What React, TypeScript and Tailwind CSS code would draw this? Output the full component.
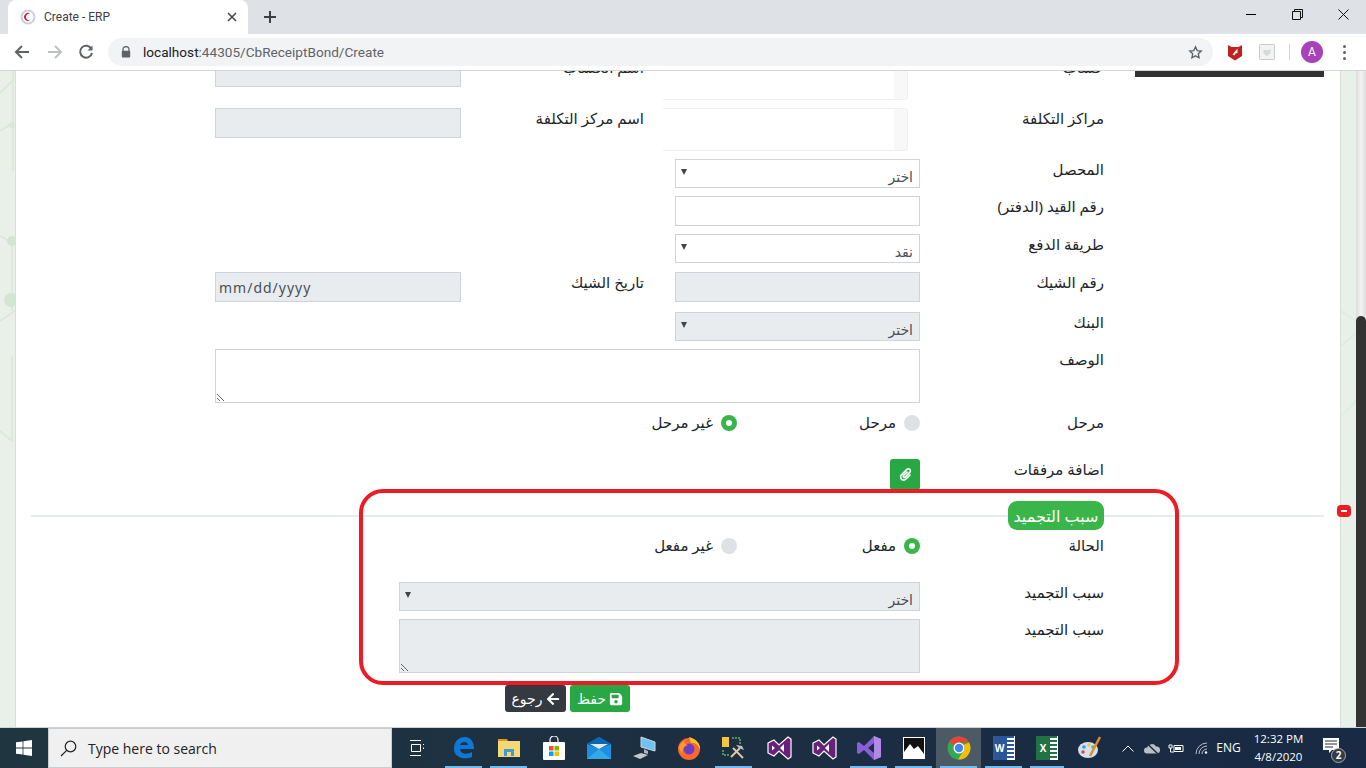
import type { ReactNode } from 'react';
import { FaArrowLeft, FaPaperclip, FaSave } from 'react-icons/fa';

const arabic = "font-['Noto_Sans','DejaVu_Sans',sans-serif]";

// browser chrome
const BrowserBar = () => (
	<div className="h-[71px] shrink-0 font-['Roboto',sans-serif]">
		<div className="h-[34px] bg-[#dee1e6] flex items-end">
			<div className="ml-[8px] w-[240px] h-[34px] bg-white rounded-t-[8px] flex items-center pl-[12px] pr-[10px]">
				<svg width="16" height="16" viewBox="0 0 16 16">
					<circle cx="8" cy="8" r="7.5" fill="#c9cfe8" />
					<circle cx="8" cy="8" r="5.5" fill="#fff" />
					<path d="M10.5 4.8A4 4 0 1 0 10.5 11.2A3.4 3.4 0 1 1 10.5 4.8Z" fill="#e2222c" />
				</svg>
				<span className="ml-[8px] text-[12px] text-[#3c4043] flex-1">Create - ERP</span>
				<svg width="10" height="10" viewBox="0 0 10 10" className="mr-[1px]">
					<path d="M1 1L9 9M9 1L1 9" stroke="#45484c" strokeWidth="1.6" />
				</svg>
			</div>
			<div className="ml-[15px] h-[34px] flex items-center">
				<svg width="14" height="14" viewBox="0 0 14 14">
					<path d="M7 1V13M1 7H13" stroke="#3c4043" strokeWidth="2" />
				</svg>
			</div>
			<div className="flex-1" />
			<div className="flex h-[29px] self-start items-center">
				<div className="w-[46px] flex justify-center">
					<div className="w-[10px] h-[1px] bg-black" />
				</div>
				<div className="w-[46px] flex justify-center">
					<svg width="11" height="11" viewBox="0 0 11 11" fill="none" stroke="#111">
						<path d="M0.5 2.5H8.5V10.5H0.5ZM2.5 2.5V0.5H10.5V8.5H8.5" />
					</svg>
				</div>
				<div className="w-[46px] flex justify-center">
					<svg width="11" height="11" viewBox="0 0 11 11">
						<path d="M0.5 0.5L10.5 10.5M10.5 0.5L0.5 10.5" stroke="#111" />
					</svg>
				</div>
			</div>
		</div>
		<div className="h-[37px] bg-white border-b border-[#d3d5d8] flex items-center">
			<svg width="16" height="16" viewBox="0 0 16 16" className="ml-[14px]" fill="none" stroke="#5f6368" strokeWidth="2">
				<path d="M15 8H2M8 2L2 8L8 14" />
			</svg>
			<svg width="16" height="16" viewBox="0 0 16 16" className="ml-[17px]" fill="none" stroke="#bcc0c4" strokeWidth="2">
				<path d="M1 8H14M8 2L14 8L8 14" />
			</svg>
			<svg width="16" height="16" viewBox="0 0 16 16" className="ml-[15px]" fill="none" stroke="#5f6368" strokeWidth="2">
				<path d="M13.5 5A6 6 0 1 0 14 9" />
				<path d="M14.5 1.5V6.5H9.5Z" fill="#5f6368" strokeWidth="0" />
			</svg>
			<div className="ml-[14px] w-[1105px] h-[28px] rounded-full bg-[#f1f3f4] flex items-center pl-[13px] pr-[10px]">
				<svg width="10" height="12" viewBox="0 0 10 12">
					<path d="M2 5V3.5a3 3 0 0 1 6 0V5" fill="none" stroke="#5f6368" strokeWidth="1.3" />
					<rect x="0.8" y="4.8" width="8.4" height="6.7" rx="1" fill="#5f6368" />
				</svg>
				<span className="ml-[12px] text-[13.6px] text-[#5f6368] flex-1">
					<span className="text-[#202124]">localhost</span>:44305/CbReceiptBond/Create
				</span>
				<svg width="15" height="15" viewBox="0 0 24 24" fill="none" stroke="#5f6368" strokeWidth="2.2">
					<path d="M12 3l2.8 5.900 6.400.8-4.700 4.400 1.200 6.400L12 17.400l-5.700 3.100 1.200-6.400L2.800 9.700l6.400-.8z" />
				</svg>
			</div>
			<svg width="16" height="17" viewBox="0 0 16 17" className="ml-[14px]">
				<path d="M1 1L4.500 3H11.500L15 1V12L8 16.500L1 12Z" fill="#c3201f" />
				<path d="M5.500 10.500L10.500 4.500L10.500 9L8.500 9.500L7.500 11.500Z" fill="#fff" />
			</svg>
			<svg width="16" height="16" viewBox="0 0 16 16" className="ml-[16px]" fill="none">
				<rect x="0.500" y="0.500" width="15" height="15" rx="1" stroke="#c7c9cc" fill="#f3f3f3" />
				<path d="M4.500 5L6 6H10L11.500 5V9.500L8 12L4.500 9.500Z" fill="#d8d9db" />
			</svg>
			<div className="ml-[14px] w-[1px] h-[16px] bg-[#d3d5d8]" />
			<div className="ml-[11px] w-[22px] h-[22px] rounded-full bg-[#a842b8] text-white text-[12px] flex items-center justify-center">A</div>
			<div className="ml-[20px] flex flex-col gap-[3px]">
				<div className="w-[3px] h-[3px] rounded-full bg-[#5f6368]" />
				<div className="w-[3px] h-[3px] rounded-full bg-[#5f6368]" />
				<div className="w-[3px] h-[3px] rounded-full bg-[#5f6368]" />
			</div>
		</div>
	</div>
);

const Strip = ({ left }: { left?: boolean }) => (
	<div className={`w-[16px] shrink-0 bg-[#e9f0ea] ${left ? 'border-r' : 'border-l'} border-[#d8dfd9]`}>
		{left ? (
			<svg width="15" height="460" viewBox="0 0 15 460" fill="none" stroke="#d7e8d7" strokeWidth="1.5">
				<path d="M0 22L14 8M0 60L13 52M13 0V100M0 165L12 172V240M0 250L15 240M12 285V370L0 360" />
				<circle cx="12" cy="54" r="3" fill="#d7e8d7" stroke="none" />
				<circle cx="12" cy="170" r="5" fill="#d2e6d2" stroke="none" />
				<circle cx="11" cy="229" r="7" fill="#d2e6d2" stroke="none" />
			</svg>
		) : (
			<svg width="15" height="460" viewBox="0 0 15 460" fill="none" stroke="#dfeadf" strokeWidth="1.500">
				<path d="M0 240L15 250M0 275L15 262M0 345L15 330" />
			</svg>
		)}
	</div>
);

const Label = ({ w = 'w-[184px]', children }: { w?: string; children: ReactNode }) => (
	<label className={`${w} shrink-0 text-[15px] leading-[21px] text-[#212529] text-right`}>{children}</label>
);

const boxBase = 'border border-[#ced4da] text-[14px] text-[#495057] block';

const Select = ({ w = 'w-[245px]', disabled, text = 'اختر' }: { w?: string; disabled?: boolean; text?: string }) => (
	<div className={`${w} relative`}>
		<select
			dir="rtl"
			disabled={disabled}
			className={`${boxBase} h-[29px] w-full appearance-none pr-[6px] pt-[6px] ${disabled ? 'bg-[#e9ecef]' : 'bg-white'} opacity-100`}
		>
			<option>{text}</option>
		</select>
		<span className="absolute left-[6px] top-[10px] w-0 h-0 border-x-[3px] border-x-transparent border-t-[6px] border-t-[#444]" />
	</div>
);

const Input = ({ w = 'w-[245px]', disabled, value }: { w?: string; disabled?: boolean; value?: string }) => (
	<input
		readOnly
		dir={value ? 'ltr' : 'rtl'}
		value={value ?? ''}
		className={`${boxBase} h-[30px] ${w} px-[3px] tracking-[1px] ${disabled ? 'bg-[#e9ecef]' : 'bg-white'}`}
	/>
);

const TextArea = ({ w, disabled }: { w: string; disabled?: boolean }) => (
	<textarea
		readOnly
		className={`${w} h-[54px] block border border-[#ced4da] ${disabled ? 'bg-[#e9ecef]' : 'bg-white'}`}
	/>
);

// the empty cost-centre box, its left side fades out
const TreeBox = () => (
	<div className="w-[245px] h-[43px] mr-[12px] flex shrink-0 border border-l-0 border-[#f0f0f0] rounded-r-[3px]">
		<div className="w-[13px] bg-[#f8f8f8]" />
	</div>
);

const Radio = ({ on, text, w }: { on?: boolean; text: string; w: string }) => (
	<div className={`${w} flex items-center gap-[8px]`}>
		<span className={`w-[16px] h-[16px] rounded-full flex items-center justify-center ${on ? 'bg-[#3ab54a]' : 'bg-[#dee2e6]'}`}>
			{on && <span className="w-[6px] h-[6px] rounded-full bg-white" />}
		</span>
		<span className="text-[15px] leading-[21px] text-[#212529]">{text}</span>
	</div>
);

const Form = () => (
	<div dir="rtl" className="w-[889px] flex flex-col">
		<div className="flex h-[43px]">
			<Label>حساب</Label>
			<TreeBox />
			<Label w="w-[202px] pr-[19px]">اسم الحساب</Label>
			<Input w="w-[246px]" disabled />
		</div>
		<div className="flex h-[43px] mt-[8px]">
			<Label>مراكز التكلفة</Label>
			<TreeBox />
			<Label w="w-[202px] pr-[19px]">اسم مركز التكلفة</Label>
			<Input w="w-[246px]" disabled />
		</div>
		<div className="flex mt-[8px]">
			<Label>المحصل</Label>
			<Select />
		</div>
		<div className="flex mt-[8px]">
			<Label>رقم القيد (الدفتر)</Label>
			<Input />
		</div>
		<div className="flex mt-[8px]">
			<Label>طريقة الدفع</Label>
			<Select text="نقد" />
		</div>
		<div className="flex mt-[9px]">
			<Label>رقم الشيك</Label>
			<Input disabled />
			<Label w="w-[214px] pr-[31px]">تاريخ الشيك</Label>
			<Input w="w-[246px]" disabled value="mm/dd/yyyy" />
		</div>
		<div className="flex mt-[10px]">
			<Label>البنك</Label>
			<Select disabled />
		</div>
		<div className="flex mt-[8px]">
			<Label>الوصف</Label>
			<TextArea w="w-[705px]" />
		</div>
		<div className="flex items-center mt-[9px] h-[21px]">
			<Label>مرحل</Label>
			<Radio w="w-[183px]" text="مرحل" />
			<Radio w="w-[200px]" on text="غير مرحل" />
		</div>
		<div className="flex mt-[26px]">
			<Label>اضافة مرفقات</Label>
			<button className="w-[30px] h-[31px] bg-[#28a745] rounded-[3px] text-white flex items-center justify-center">
				<FaPaperclip size={13} />
			</button>
		</div>
	</div>
);

const Lower = () => (
	<div dir="rtl" className="w-[889px] ml-[199px] flex flex-col">
		<div className="flex items-center h-[21px] mt-[5px]">
			<Label>الحالة</Label>
			<Radio w="w-[183px]" on text="مفعل" />
			<Radio w="w-[200px]" text="غير مفعل" />
		</div>
		<div className="flex mt-[26px]">
			<Label>سبب التجميد</Label>
			<Select w="w-[521px]" disabled />
		</div>
		<div className="flex mt-[8px]">
			<Label>سبب التجميد</Label>
			<TextArea w="w-[521px]" disabled />
		</div>
		<div className="flex gap-[4px] mt-[12px] mr-[474px]">
			<button className="w-[60px] h-[27px] bg-[#28a745] rounded-[3px] text-white text-[14px] flex items-center justify-center gap-[3px]">
				<FaSave size={14} />
				حفظ
			</button>
			<button className="w-[61px] h-[27px] bg-[#343a40] rounded-[3px] text-white text-[14px] flex items-center justify-center gap-[3px]">
				<FaArrowLeft size={14} />
				رجوع
			</button>
		</div>
	</div>
);

const Page = () => (
	<div className={`h-[656px] flex overflow-hidden relative ${arabic}`}>
		<Strip left />
		<div className="w-[1324px] shrink-0 bg-white flex flex-col">
			<div className="-mt-[14px] flex h-[444px]">
				<div className="w-[1088px] pl-[199px] shrink-0">
					<Form />
				</div>
				<div className="ml-[31px] mt-[14px] w-[189px] h-[6px] bg-[#333] shrink-0" />
			</div>
			<div className="ml-[15px] h-[29px] flex items-center">
				<div className="w-[977px] h-[2px] bg-[#e9ecef]" />
				<div className="w-[96px] h-[29px] rounded-[9px] bg-[#3ab54a] text-white text-[16px] flex items-center justify-center">سبب التجميد</div>
				<div className="w-[220px] h-[2px] bg-[#e9ecef]" />
			</div>
			<Lower />
		</div>
		<Strip />
		<div className="w-[10px] shrink-0 bg-gradient-to-r from-[#dcdcdc] via-[#f4f4f4] to-[#dcdcdc] flex flex-col">
			<div className="h-[245px]" />
			<div className="flex-1 bg-[#333] rounded-t-[5px]" />
		</div>
		{/* annotation drawn over the screenshot */}
		<div className="absolute left-[359px] top-[418px] w-[820px] h-[196px] border-4 border-[#ed1c24] rounded-[24px]" />
		<div className="absolute left-[1337px] top-[434px] w-[14px] h-[12px] bg-[#ed1c24] rounded-[4px] flex items-center justify-center">
			<div className="w-[6px] h-[2px] bg-white" />
		</div>
	</div>
);

// taskbar icons
const Slot = ({ w = 'w-[45px]', line, active, children }: { w?: string; line?: boolean; active?: boolean; children: ReactNode }) => (
	<div className={`${w} h-[40px] relative flex items-center justify-center ${active ? 'bg-[#4b5a65]' : ''}`}>
		{children}
		{line && <div className="absolute bottom-0 left-[4px] right-[4px] h-[2px] bg-[#76b9ed]" />}
	</div>
);

const VsOld = () => (
	<svg width="26" height="26" viewBox="0 0 26 26">
		<path d="M2 8L8 5L13 10L22 2L25 4V22L22 24L13 16L8 21L2 18Z" fill="#68217a" stroke="#fff" strokeWidth="1.200" />
		<path d="M6 10.500V15.500L9 13ZM18 9V17L14 13Z" fill="#fff" />
	</svg>
);

const Taskbar = () => (
	<div className="h-[40px] flex items-center bg-gradient-to-r from-[#1f3640] via-[#1c2f42] to-[#182a44] font-['Open_Sans',sans-serif]">
		<div className="w-[48px] flex justify-center">
			<svg width="16" height="16" viewBox="0 0 16 16" fill="#fff">
				<path d="M0 2.300L6.600 1.400V7.500H0ZM7.400 1.300L16 0V7.500H7.400ZM0 8.400H6.600V14.600L0 13.700ZM7.400 8.400H16V16L7.400 14.700Z" />
			</svg>
		</div>
		<div className="w-[344px] h-[40px] bg-[#f0f0f0] border border-[#c9cdd0] flex items-center pl-[11px]">
			<svg width="17" height="17" viewBox="0 0 17 17" fill="none" stroke="#222" strokeWidth="1.200">
				<circle cx="10.500" cy="6.500" r="5.300" />
				<path d="M6.700 10.300L1 16" />
			</svg>
			<span className="ml-[11px] text-[14px] text-[#222]">Type here to search</span>
		</div>
		<Slot w="w-[49px]">
			<svg width="16" height="18" viewBox="0 0 16 18" fill="none" stroke="#fff">
				<path d="M1 1.500H12M2.500 5.500H11.500V12.500H2.500ZM1 16.500H12M14.500 5V6M14.500 8.500V10" />
			</svg>
		</Slot>
		<Slot line>
			<svg width="22" height="24" viewBox="0 0 22 24">
				<path d="M1 13C1 5 6 1 12 1C18 1 21 6 21 13H7C7 18 14 19 19 16V21C12 24 1 22 1 13ZM7 9H15C15 5 8 5 7 9Z" fill="#0d78d6" />
			</svg>
		</Slot>
		<Slot line>
			<svg width="22" height="20" viewBox="0 0 22 20">
				<path d="M0 3H22V19H0Z" fill="#f7d774" />
				<path d="M0 1H9L10 3H0Z" fill="#d9982a" />
				<path d="M6 18V11H16V18H13V14H9V18Z" fill="#3d9ad9" />
			</svg>
		</Slot>
		<Slot>
			<svg width="22" height="24" viewBox="0 0 22 24">
				<path d="M7 7V4a4 4 0 0 1 8 0V7" fill="none" stroke="#fff" strokeWidth="1.200" />
				<rect x="0" y="6" width="22" height="18" rx="1" fill="#fff" />
				<rect x="6" y="10" width="4.500" height="4.500" fill="#f25022" />
				<rect x="11.500" y="10" width="4.500" height="4.500" fill="#7fba00" />
				<rect x="6" y="15.500" width="4.500" height="4.500" fill="#00a4ef" />
				<rect x="11.500" y="15.500" width="4.500" height="4.500" fill="#ffb900" />
			</svg>
		</Slot>
		<Slot>
			<svg width="24" height="22" viewBox="0 0 24 22">
				<path d="M0 7L12 0L24 7V22H0Z" fill="#1b8fe0" />
				<path d="M0 7L12 0L24 7L12 12Z" fill="#0a67b4" />
				<path d="M3 7L21 7L12 12Z" fill="#dfe8ee" />
				<path d="M0 22L12 12L24 22Z" fill="#35a8ea" />
			</svg>
		</Slot>
		<Slot>
			<svg width="24" height="24" viewBox="0 0 24 24">
				<path d="M9 1L23 6V15L9 11Z" fill="#6fc3f2" stroke="#cfd8dc" />
				<path d="M12 13L16 15V18L12 17Z" fill="#aeb4b8" />
				<path d="M1 20L9 17L16 19L8 23Z" fill="#c4c9cc" />
			</svg>
		</Slot>
		<Slot>
			<svg width="24" height="24" viewBox="0 0 24 24">
				<circle cx="12" cy="13" r="11" fill="#f9682d" />
				<path d="M12 1C20 3 24 9 23 14C22 10 18 6 14 7Z" fill="#ffbd2e" />
				<circle cx="12" cy="13" r="5.500" fill="#6c3ec2" />
				<path d="M2 12C3 7 6 5 8 5C6 8 9 8 11 9C7 10 6 12 5 18Z" fill="#ff9a2b" />
			</svg>
		</Slot>
		<Slot line>
			<svg width="24" height="24" viewBox="0 0 24 24">
				<rect x="0" y="1" width="7" height="10" fill="#f5c542" />
				<path d="M10 2H18V9M1 14V19H8" fill="none" stroke="#62b05a" strokeWidth="1.500" strokeDasharray="2 1" />
				<path d="M9 21L18 12M11 12L21 22" stroke="#d8c9a0" strokeWidth="2" />
				<path d="M14 9L20 10L22 14L17 12Z" fill="#c0c5c9" />
			</svg>
		</Slot>
		<Slot><VsOld /></Slot>
		<Slot><VsOld /></Slot>
		<Slot line>
			<svg width="24" height="24" viewBox="0 0 24 24">
				<path d="M17 0L24 3V21L17 24L7 14L2 18L0 17V7L2 6L7 10ZM17 7L11 12L17 17Z" fill="#8a5fd6" />
				<path d="M17 0L24 3V21L17 24Z" fill="#b18ae8" />
			</svg>
		</Slot>
		<Slot line>
			<svg width="22" height="22" viewBox="0 0 22 22">
				<rect x="0.500" y="0.500" width="21" height="21" fill="#111" stroke="#fff" />
				<path d="M1 21V15L7 7L11 12L15 9L21 17V21Z" fill="#fff" />
			</svg>
		</Slot>
		<Slot active line>
			<svg width="24" height="24" viewBox="0 0 24 24">
				<circle cx="12" cy="12" r="11.500" fill="#34a853" />
				<path d="M12 .5A11.500 11.500 0 0 1 22 6.500H12A5.500 5.500 0 0 0 7 9.500L2.500 5.500A11.500 11.500 0 0 1 12 .5Z" fill="#ea4335" />
				<path d="M22 6.500A11.500 11.500 0 0 1 11 23.500L16.500 15A5.500 5.500 0 0 0 16.500 9Z" fill="#fbbc05" />
				<circle cx="12" cy="12" r="5.500" fill="#fff" />
				<circle cx="12" cy="12" r="4.200" fill="#4285f4" />
			</svg>
		</Slot>
		<Slot line>
			<div className="relative w-[22px] h-[24px] bg-white flex justify-end">
				<div className="w-[8px] h-[24px] bg-[repeating-linear-gradient(#2b579a_0,#2b579a_2px,#fff_2px,#fff_4px)] mr-[1px]" />
				<div className="absolute left-0 top-0 w-[14px] h-[24px] bg-[#2b579a] text-white text-[10px] font-bold flex items-center justify-center">W</div>
			</div>
		</Slot>
		<Slot w="w-[42px]" line>
			<div className="relative w-[22px] h-[24px] bg-white flex justify-end">
				<div className="w-[8px] h-[24px] bg-[repeating-linear-gradient(#217346_0,#217346_2px,#fff_2px,#fff_4px)] mr-[1px]" />
				<div className="absolute left-0 top-0 w-[14px] h-[24px] bg-[#217346] text-white text-[10px] font-bold flex items-center justify-center">X</div>
			</div>
		</Slot>
		<Slot w="w-[43px]">
			<svg width="24" height="24" viewBox="0 0 24 24">
				<ellipse cx="10" cy="14" rx="10" ry="8" fill="#cfe3f2" />
				<circle cx="6" cy="11" r="1.800" fill="#3a9ad9" />
				<circle cx="11" cy="9" r="1.800" fill="#f5c542" />
				<circle cx="5" cy="16" r="1.800" fill="#e0483e" />
				<circle cx="15" cy="11" r="1.800" fill="#5cb85c" />
				<path d="M22 1L12 20" stroke="#e58a2a" strokeWidth="2.500" />
			</svg>
		</Slot>
		<Slot w="w-[33px]">
			<svg width="12" height="7" viewBox="0 0 12 7" fill="none" stroke="#fff">
				<path d="M0.500 6.500L6 1L11.500 6.500" />
			</svg>
		</Slot>
		<Slot w="w-[16px]">
			<svg width="16" height="12" viewBox="0 0 16 12" className="shrink-0">
				<path d="M3 11.500A3 3 0 0 1 3 5.500A5 5 0 0 1 12 4.500A3.500 3.500 0 0 1 13 11.500Z" fill="#b9bfc4" />
				<path d="M2 .5L14 12" stroke="#1c2f42" strokeWidth="1.500" />
			</svg>
		</Slot>
		<Slot w="w-[32px]">
			<svg width="16" height="12" viewBox="0 0 16 12" fill="none" stroke="#fff">
				<path d="M1 3H4V6H1ZM2.500 6V10H6M6 3.500H15V9.500H6Z" />
				<rect x="7" y="5" width="6" height="3" fill="#fff" stroke="none" />
			</svg>
		</Slot>
		<Slot w="w-[20px]">
			<svg width="14" height="12" viewBox="0 0 14 12" fill="none" stroke="#b5bcc2" className="shrink-0">
				<path d="M1 12A11 11 0 0 1 12 1M4 12A8 8 0 0 1 12 4M7 12A5 5 0 0 1 12 7" />
				<circle cx="11" cy="10.500" r="1.200" fill="#fff" stroke="none" />
			</svg>
		</Slot>
		<span className="w-[33px] text-center text-[12px] text-white">ENG</span>
		<div className="w-[61px] ml-[3px] text-center text-[11.500px] leading-[18px] text-white">
			<div>12:32 PM</div>
			<div>4/8/2020</div>
		</div>
		<div className="ml-[14px] relative w-[20px] h-[24px]">
			<svg width="16" height="16" viewBox="0 0 16 16" className="mt-[2px]">
				<path d="M0 0H16V12H9L6 15V12H0Z" fill="#fff" />
				<path d="M2 3H14M2 6H14M2 9H10" stroke="#1c2f42" />
			</svg>
			<span className="absolute right-[-3px] bottom-[-3px] w-[15px] h-[15px] rounded-full bg-[#333b44] border border-[#aaa] text-white text-[10px] font-bold flex items-center justify-center">2</span>
		</div>
	</div>
);

export default function App() {
	return (
		<div className="w-[1366px] h-[768px] overflow-hidden flex flex-col bg-white">
			<BrowserBar />
			<Page />
			<div className="h-[1px] bg-[#cfd2d4]" />
			<Taskbar />
		</div>
	);
}
